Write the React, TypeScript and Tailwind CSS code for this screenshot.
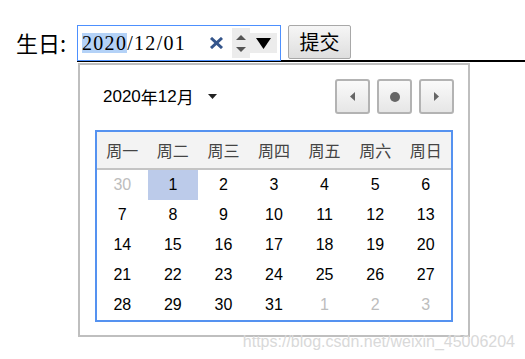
const weekdays = ['周一', '周二', '周三', '周四', '周五', '周六', '周日']

// [day, inCurrentMonth]
const weeks: [number, boolean][][] = [
  [[30, false], [1, true], [2, true], [3, true], [4, true], [5, true], [6, true]],
  [[7, true], [8, true], [9, true], [10, true], [11, true], [12, true], [13, true]],
  [[14, true], [15, true], [16, true], [17, true], [18, true], [19, true], [20, true]],
  [[21, true], [22, true], [23, true], [24, true], [25, true], [26, true], [27, true]],
  [[28, true], [29, true], [30, true], [31, true], [1, false], [2, false], [3, false]],
]

function NavButton({ children }: { children: React.ReactNode }) {
  return (
    <button className="w-[35px] h-[35px] rounded-[3px] border-2 border-[#b3b3b3] bg-gradient-to-b from-[#fafafa] to-[#e6e6e6] flex items-center justify-center">
      {children}
    </button>
  )
}

export default function App() {
  return (
    <div className="relative w-[525px] h-[359px] bg-white overflow-hidden font-['Liberation_Sans',sans-serif] text-black">
      {/* Form row */}
      <div className="flex items-start pt-[25px] pl-[16px]">
        <span className="w-[61px] mt-[3px] text-[22px] leading-[28px] font-['Noto_Sans_CJK_SC',sans-serif]">
          生日:
        </span>

        {/* Date input */}
        <div className="w-[204px] h-[36px] border border-[#4d90fe] flex items-center relative z-10 bg-white">
          <div className="pl-[4px] flex items-center font-['Liberation_Serif',serif] text-[20px] leading-[20px] tracking-[1.3px] w-[131px]">
            <span className="bg-[#b4d2f7]">2020</span>
            <span>/12/01</span>
          </div>
          <svg className="w-[15px] h-[12px]" viewBox="0 0 15 12">
            <path d="M2 1 L13 11 M13 1 L2 11" stroke="#34558b" strokeWidth="3" strokeLinecap="butt" />
          </svg>
          <div className="ml-[8px] w-[18px] h-[30px] bg-[#ececec] flex flex-col items-center justify-center gap-[7px]">
            <svg width="10" height="5" viewBox="0 0 10 5"><path d="M0 5 L5 0 L10 5 Z" fill="#555" /></svg>
            <svg width="10" height="5" viewBox="0 0 10 5"><path d="M0 0 L5 5 L10 0 Z" fill="#555" /></svg>
          </div>
          <div className="w-[27px] h-[20px] bg-[#ececec] flex items-center justify-center">
            <svg width="15" height="11" viewBox="0 0 15 11"><path d="M0 0 L15 0 L7.5 11 Z" fill="#000" /></svg>
          </div>
        </div>

        <button className="ml-[7px] w-[63px] h-[34px] border border-[#a8a8a8] rounded-[2px] bg-gradient-to-b from-[#f6f6f6] to-[#dedede] text-[20px] leading-[20px] font-['Noto_Sans_CJK_SC',sans-serif]">
          提交
        </button>
      </div>

      {/* Rule under the row */}
      <div className="ml-[77px] -mt-[1px] h-[2px] bg-black" />

      {/* Picker popup */}
      <div className="ml-[78px] mt-[1px] w-[392px] border-2 border-[#bfbfbf] bg-white px-[15px] pt-[14px] pb-[13px]">
        <div className="flex items-center justify-between">
          <div className="ml-[8px] flex items-center text-[17px] leading-[20px]">
            <span>2020</span>
            <span className="font-['Noto_Sans_CJK_SC',sans-serif]">年</span>
            <span>12</span>
            <span className="font-['Noto_Sans_CJK_SC',sans-serif]">月</span>
            <svg className="ml-[14px]" width="9" height="5" viewBox="0 0 9 5"><path d="M0 0 L9 0 L4.5 5 Z" fill="#222" /></svg>
          </div>
          <div className="flex gap-[7px] mr-[-1px]">
            <NavButton>
              <svg width="5" height="9" viewBox="0 0 5 9"><path d="M5 0 L0 4.5 L5 9 Z" fill="#666" /></svg>
            </NavButton>
            <NavButton>
              <span className="w-[10px] h-[10px] rounded-full bg-[#666]" />
            </NavButton>
            <NavButton>
              <svg width="5" height="9" viewBox="0 0 5 9"><path d="M0 0 L5 4.5 L0 9 Z" fill="#666" /></svg>
            </NavButton>
          </div>
        </div>

        <div className="mt-[16px] border-2 border-[#5592f0]">
          <div className="grid grid-cols-7 h-[38px] bg-[#f3f3f3] border-b-2 border-[#c4c4c4] items-center">
            {weekdays.map((d) => (
              <div key={d} className="text-center text-[16px] text-[#444] font-['Noto_Sans_CJK_SC',serif]">
                {d}
              </div>
            ))}
          </div>
          {weeks.map((week, i) => (
            <div key={i} className="grid grid-cols-7">
              {week.map(([day, current], j) => (
                <div
                  key={j}
                  className={
                    'h-[30px] flex items-center justify-center text-[16px] ' +
                    (current ? 'text-black' : 'text-[#bdbdbd]') +
                    (i === 0 && j === 1 ? ' bg-[#bccbea]' : '')
                  }
                >
                  {day}
                </div>
              ))}
            </div>
          ))}
        </div>
      </div>

      {/* Watermark */}
      <div className="absolute right-[10px] bottom-[8px] text-[16px] leading-[18px] text-[#d9d9d9]">
        https://blog.csdn.net/weixin_45006204
      </div>
    </div>
  )
}
